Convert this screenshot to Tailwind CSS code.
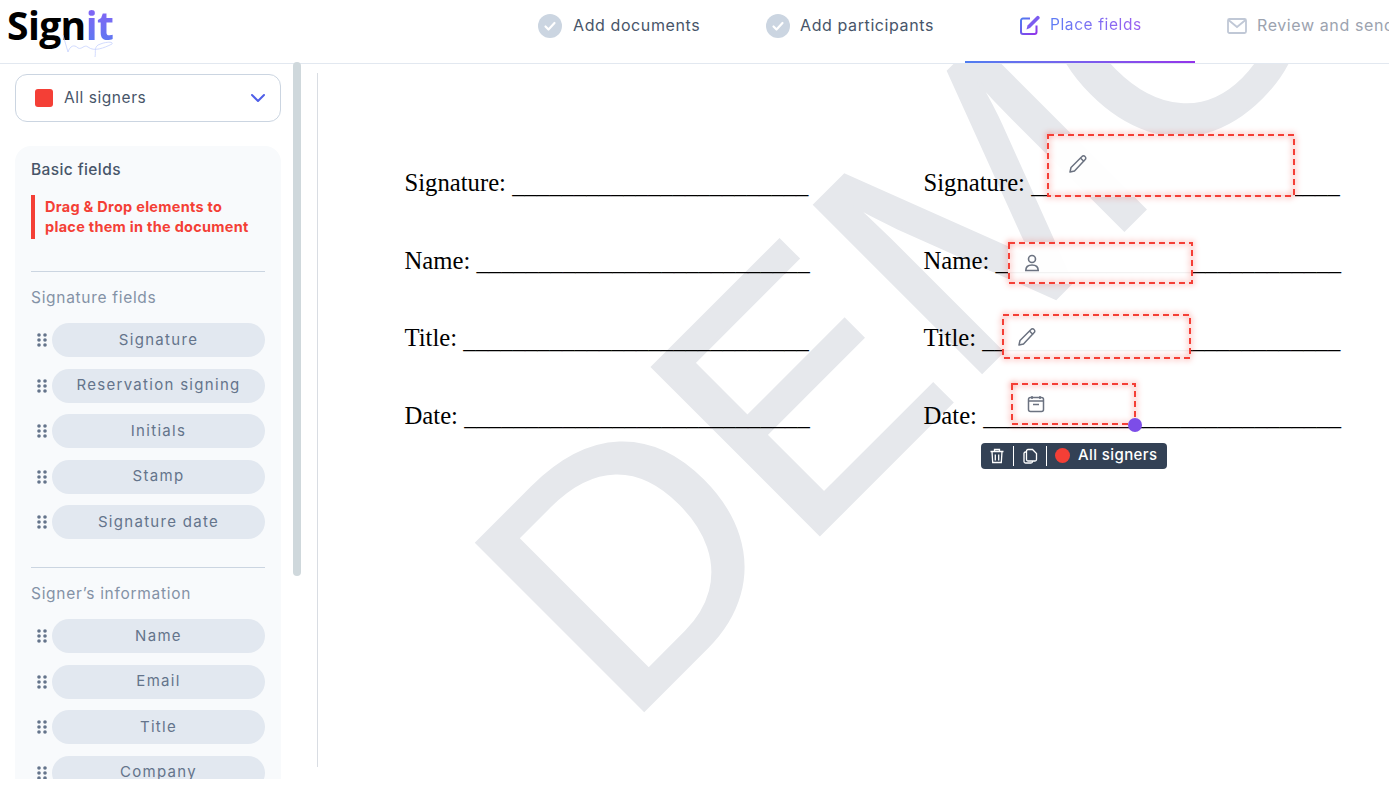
<!DOCTYPE html>
<html lang="en">
<head>
    <meta charset="UTF-8">
    <meta name="viewport" content="width=device-width, initial-scale=1.0">
    <title>Signit - Place fields</title>
    <script src="https://cdn.jsdelivr.net/npm/@tailwindcss/browser@4"></script>
</head>
<body class="bg-white font-['Inter',sans-serif] h-[799px] w-[1389px] overflow-hidden">
    <!-- top bar -->
    <header class="relative h-[64px] border-b border-[#e2e8f0] flex">
        <div class="relative w-[520px] pl-[7px] pt-[2px]">
            <span class="font-['Open_Sans',sans-serif] font-bold text-[39px] leading-[46px] tracking-[-0.6px] text-black">Sign<span class="bg-gradient-to-b from-[#8b5cf6] to-[#4f7df0] bg-clip-text text-transparent">it</span></span>
            <svg class="absolute left-[60px] top-[30px]" width="56" height="28" viewBox="0 0 56 28" fill="none" stroke="#c7d2fe" stroke-width="0.8"><path d="M3 5 L8 22 C10 16 14 14 18 18 C22 20 24 14 28 17 C34 22 44 18 52 14 C54 11 44 12 38 15 C34 18 36 22 35 27"/></svg>
        </div>
        <nav class="absolute left-0 top-0 h-[63px] w-full text-[16px] tracking-[0.6px] overflow-hidden">
            <div class="absolute left-[538px] top-[14px] flex items-center gap-[11px] text-[#475569]">
                <svg width="24" height="24" viewBox="0 0 24 24"><circle cx="12" cy="12" r="12" fill="#cbd5e1"/><path d="M7.5 12.5l3 3 6-6.5" fill="none" stroke="#fff" stroke-width="2.2" stroke-linecap="round" stroke-linejoin="round"/></svg>
                <span class="relative top-[-1px]">Add documents</span>
            </div>
            <div class="absolute left-[766px] top-[14px] flex items-center gap-[10px] text-[#475569]">
                <svg width="24" height="24" viewBox="0 0 24 24"><circle cx="12" cy="12" r="12" fill="#cbd5e1"/><path d="M7.5 12.5l3 3 6-6.5" fill="none" stroke="#fff" stroke-width="2.2" stroke-linecap="round" stroke-linejoin="round"/></svg>
                <span class="relative top-[-1px]">Add participants</span>
            </div>
            <div class="absolute left-[1020px] top-[14px] flex items-center gap-[10px] text-[15.5px]">
                <svg width="20" height="21" viewBox="0 0 20 21" fill="none"><defs><linearGradient id="g1" x1="0" y1="0" x2="1" y2="1"><stop stop-color="#4f7df0"/><stop offset="1" stop-color="#9333ea"/></linearGradient></defs><path d="M10 3.5H3a2 2 0 0 0-2 2V17a2 2 0 0 0 2 2h11.5a2 2 0 0 0 2-2v-6.5" stroke="url(#g1)" stroke-width="2"/><path d="M6.5 14.5l1-4L16.5 1.5a1.8 1.8 0 0 1 2.6 2.6L10 13z" fill="#7c5cf0"/></svg>
                <span class="relative top-[-1px] bg-gradient-to-r from-[#5b7cf5] to-[#9b5cf0] bg-clip-text text-transparent">Place fields</span>
            </div>
            <div class="absolute left-[1227px] top-[14px] flex items-center gap-[10px] text-[#9ca3af] whitespace-nowrap">
                <svg width="20" height="18" viewBox="0 0 20 18" fill="none" stroke="#c0c8d6" stroke-width="1.8"><rect x="1" y="2" width="18" height="14" rx="1.5"/><path d="M1.5 3l8.5 7 8.5-7"/></svg>
                <span class="relative top-[-1px]">Review and send</span>
            </div>
            <div class="absolute left-[965px] top-[61px] h-[2px] w-[230px] bg-gradient-to-r from-[#4f7df0] to-[#9333ea]"></div>
        </nav>
    </header>

    <div class="flex h-[735px]">
        <!-- left sidebar -->
        <aside class="relative w-[317px] shrink-0 h-[715px]">
            <div class="h-full overflow-hidden pl-[15px] pt-[10px]">
                <div class="w-[266px] h-[48px] rounded-xl border border-[#cbd5e1] flex items-center pl-[19px] pr-[14px] text-[15.5px] tracking-[0.55px] text-[#475569]">
                    <span class="w-[18px] h-[18px] rounded-[3px] bg-[#f43f36]"></span>
                    <span class="ml-[11px]">All signers</span>
                    <svg class="ml-auto" width="16" height="10" viewBox="0 0 16 10" fill="none" stroke="#4f5fe8" stroke-width="2" stroke-linecap="round" stroke-linejoin="round"><path d="M2 2l6 6 6-6"/></svg>
                </div>
                <div class="mt-[24px] w-[266px] rounded-t-2xl bg-[#f8fafc] px-[16px] pt-[13px] pb-[40px]">
                    <h2 class="text-[15.5px] leading-[21px] tracking-[0.4px] font-medium text-[#475569]">Basic fields</h2>
                    <p class="mt-[15px] border-l-4 border-[#f43f36] pl-[10px] text-[14.5px] leading-[20px] h-[44px] pt-[2px] font-bold tracking-[0.28px] text-[#f43f36] whitespace-nowrap">Drag &amp; Drop elements to<br>place them in the document</p>
                    <hr class="mt-[32px] border-[#cbd5e1]">
                    <h3 class="mt-[15px] text-[15.5px] leading-[21px] tracking-[0.7px] text-[#8492a6]">Signature fields</h3>
                    <ul class="mt-[15px] flex flex-col gap-[11.5px] text-[15px] tracking-[1.3px] text-[#64748b]">
                        <li class="flex items-center"><svg class="w-[21px] shrink-0 pl-[6px]" height="14" viewBox="0 0 15 14" fill="#64748b"><circle cx="2" cy="2" r="1.8"/><circle cx="8" cy="2" r="1.8"/><circle cx="2" cy="7" r="1.8"/><circle cx="8" cy="7" r="1.8"/><circle cx="2" cy="12" r="1.8"/><circle cx="8" cy="12" r="1.8"/></svg><span class="h-[34px] w-[213px] rounded-full bg-[#e2e8f0] flex items-center justify-center">Signature</span></li>
                        <li class="flex items-center"><svg class="w-[21px] shrink-0 pl-[6px]" height="14" viewBox="0 0 15 14" fill="#64748b"><circle cx="2" cy="2" r="1.8"/><circle cx="8" cy="2" r="1.8"/><circle cx="2" cy="7" r="1.8"/><circle cx="8" cy="7" r="1.8"/><circle cx="2" cy="12" r="1.8"/><circle cx="8" cy="12" r="1.8"/></svg><span class="h-[34px] w-[213px] rounded-full bg-[#e2e8f0] flex items-center justify-center">Reservation signing</span></li>
                        <li class="flex items-center"><svg class="w-[21px] shrink-0 pl-[6px]" height="14" viewBox="0 0 15 14" fill="#64748b"><circle cx="2" cy="2" r="1.8"/><circle cx="8" cy="2" r="1.8"/><circle cx="2" cy="7" r="1.8"/><circle cx="8" cy="7" r="1.8"/><circle cx="2" cy="12" r="1.8"/><circle cx="8" cy="12" r="1.8"/></svg><span class="h-[34px] w-[213px] rounded-full bg-[#e2e8f0] flex items-center justify-center">Initials</span></li>
                        <li class="flex items-center"><svg class="w-[21px] shrink-0 pl-[6px]" height="14" viewBox="0 0 15 14" fill="#64748b"><circle cx="2" cy="2" r="1.8"/><circle cx="8" cy="2" r="1.8"/><circle cx="2" cy="7" r="1.8"/><circle cx="8" cy="7" r="1.8"/><circle cx="2" cy="12" r="1.8"/><circle cx="8" cy="12" r="1.8"/></svg><span class="h-[34px] w-[213px] rounded-full bg-[#e2e8f0] flex items-center justify-center">Stamp</span></li>
                        <li class="flex items-center"><svg class="w-[21px] shrink-0 pl-[6px]" height="14" viewBox="0 0 15 14" fill="#64748b"><circle cx="2" cy="2" r="1.8"/><circle cx="8" cy="2" r="1.8"/><circle cx="2" cy="7" r="1.8"/><circle cx="8" cy="7" r="1.8"/><circle cx="2" cy="12" r="1.8"/><circle cx="8" cy="12" r="1.8"/></svg><span class="h-[34px] w-[213px] rounded-full bg-[#e2e8f0] flex items-center justify-center">Signature date</span></li>
                    </ul>
                    <hr class="mt-[28px] border-[#cbd5e1]">
                    <h3 class="mt-[15px] text-[15.5px] leading-[21px] tracking-[0.7px] text-[#8492a6]">Signer’s information</h3>
                    <ul class="mt-[15px] flex flex-col gap-[11.5px] text-[15px] tracking-[1.3px] text-[#64748b]">
                        <li class="flex items-center"><svg class="w-[21px] shrink-0 pl-[6px]" height="14" viewBox="0 0 15 14" fill="#64748b"><circle cx="2" cy="2" r="1.8"/><circle cx="8" cy="2" r="1.8"/><circle cx="2" cy="7" r="1.8"/><circle cx="8" cy="7" r="1.8"/><circle cx="2" cy="12" r="1.8"/><circle cx="8" cy="12" r="1.8"/></svg><span class="h-[34px] w-[213px] rounded-full bg-[#e2e8f0] flex items-center justify-center">Name</span></li>
                        <li class="flex items-center"><svg class="w-[21px] shrink-0 pl-[6px]" height="14" viewBox="0 0 15 14" fill="#64748b"><circle cx="2" cy="2" r="1.8"/><circle cx="8" cy="2" r="1.8"/><circle cx="2" cy="7" r="1.8"/><circle cx="8" cy="7" r="1.8"/><circle cx="2" cy="12" r="1.8"/><circle cx="8" cy="12" r="1.8"/></svg><span class="h-[34px] w-[213px] rounded-full bg-[#e2e8f0] flex items-center justify-center">Email</span></li>
                        <li class="flex items-center"><svg class="w-[21px] shrink-0 pl-[6px]" height="14" viewBox="0 0 15 14" fill="#64748b"><circle cx="2" cy="2" r="1.8"/><circle cx="8" cy="2" r="1.8"/><circle cx="2" cy="7" r="1.8"/><circle cx="8" cy="7" r="1.8"/><circle cx="2" cy="12" r="1.8"/><circle cx="8" cy="12" r="1.8"/></svg><span class="h-[34px] w-[213px] rounded-full bg-[#e2e8f0] flex items-center justify-center">Title</span></li>
                        <li class="flex items-center"><svg class="w-[21px] shrink-0 pl-[6px]" height="14" viewBox="0 0 15 14" fill="#64748b"><circle cx="2" cy="2" r="1.8"/><circle cx="8" cy="2" r="1.8"/><circle cx="2" cy="7" r="1.8"/><circle cx="8" cy="7" r="1.8"/><circle cx="2" cy="12" r="1.8"/><circle cx="8" cy="12" r="1.8"/></svg><span class="h-[34px] w-[213px] rounded-full bg-[#e2e8f0] flex items-center justify-center">Company</span></li>
                    </ul>
                </div>
            </div>
            <div class="absolute left-[293px] top-[-2px] h-[514px] w-[8px] rounded-full bg-[#cfd8dc]"></div>
        </aside>

        <!-- document -->
        <main class="relative flex-1 h-[735px] overflow-hidden">
            <div class="absolute left-0 top-[9px] h-[694px] w-px bg-[#d9dde3]"></div>
            <div class="absolute left-[72px] top-[45px] -rotate-45 origin-center font-['Liberation_Sans',sans-serif] text-[344px] leading-none text-[#e6e8ec] [-webkit-text-stroke:3px_#e6e8ec] whitespace-nowrap select-none">DEMO</div>

            <div class="relative grid grid-cols-[519px_1fr] pl-[87.5px] pt-[99px] font-['Liberation_Serif',serif] text-[24.7px] leading-[40px] text-black">
                <div class="flex flex-col gap-[37.5px] whitespace-nowrap">
                    <p>Signature: <span class="relative top-[1.5px]">________________________</span></p>
                    <p>Name: <span class="relative top-[1.5px]">___________________________</span></p>
                    <p>Title: <span class="relative top-[1.5px]">____________________________</span></p>
                    <p>Date: <span class="relative top-[1.5px]">____________________________</span></p>
                </div>
                <div class="flex flex-col gap-[37.5px] whitespace-nowrap">
                    <p>Signature: <span class="relative top-[1.5px]">_________________________</span></p>
                    <p>Name: <span class="relative top-[1.5px]">____________________________</span></p>
                    <p>Title: <span class="relative top-[1.5px]">_____________________________</span></p>
                    <p>Date: <span class="relative top-[1.5px]">_____________________________</span></p>
                </div>
            </div>

            <!-- placed fields -->
            <div class="absolute left-[730px] top-[70px] w-[248px] h-[63px] bg-white/95 pl-[21px] pt-[20px]">
                <svg class="absolute left-0 top-0 overflow-visible drop-shadow-[0_0_3px_#f43f36]" width="248" height="63" fill="none"><rect x="1" y="1" width="246" height="61" stroke="#f43f36" stroke-width="2" stroke-dasharray="6 4"/></svg>
                <svg class="w-[20px] h-[20px]" viewBox="0 0 20 20" fill="none" stroke="#6b7280" stroke-width="1.5" stroke-linejoin="round"><path d="M2 18l1-4.5L14 2.5a2 2 0 0 1 3 0 2 2 0 0 1 .2 3L6.5 17z"/><path d="M12.5 4l3.5 3.5"/></svg>
            </div>
            <div class="absolute left-[691px] top-[178px] w-[185px] h-[42px] bg-white/95 pl-[15px] pt-[12px]">
                <svg class="absolute left-0 top-0 overflow-visible drop-shadow-[0_0_3px_#f43f36]" width="185" height="42" fill="none"><rect x="1" y="1" width="183" height="40" stroke="#f43f36" stroke-width="2" stroke-dasharray="6 4"/></svg>
                <svg class="w-[18px] h-[18px]" viewBox="0 0 18 18" fill="none" stroke="#6b7280" stroke-width="1.6"><circle cx="9" cy="5" r="3.5"/><path d="M2.8 16.5c0-3.5 2.5-5.5 6.2-5.5s6.2 2 6.2 5.5z"/></svg>
            </div>
            <div class="absolute left-[685px] top-[250px] w-[189px] h-[45px] bg-white/95 pl-[15px] pt-[13px]">
                <svg class="absolute left-0 top-0 overflow-visible drop-shadow-[0_0_3px_#f43f36]" width="189" height="45" fill="none"><rect x="1" y="1" width="187" height="43" stroke="#f43f36" stroke-width="2" stroke-dasharray="6 4"/></svg>
                <svg class="w-[20px] h-[20px]" viewBox="0 0 20 20" fill="none" stroke="#6b7280" stroke-width="1.5" stroke-linejoin="round"><path d="M2 18l1-4.5L14 2.5a2 2 0 0 1 3 0 2 2 0 0 1 .2 3L6.5 17z"/><path d="M12.5 4l3.5 3.5"/></svg>
            </div>
            <div class="absolute left-[694px] top-[319px] w-[125px] h-[42px] bg-white/95 pl-[16px] pt-[12px]">
                <svg class="absolute left-0 top-0 overflow-visible drop-shadow-[0_0_3px_#f43f36]" width="125" height="42" fill="none"><rect x="1" y="1" width="123" height="40" stroke="#f43f36" stroke-width="2" stroke-dasharray="6 4"/></svg>
                <svg class="w-[18px] h-[18px]" viewBox="0 0 18 18" fill="none" stroke="#6b7280" stroke-width="1.5"><rect x="1.5" y="2.5" width="15" height="14" rx="2"/><path d="M1.5 6h15M5 1v3M13 1v3M6 9.5h6"/></svg>
            </div>
            <div class="absolute left-[811px] top-[354px] w-[14px] h-[14px] rounded-full bg-[#7c4de8]"></div>
            <!-- field toolbar -->
            <div class="absolute left-[664px] top-[379px] h-[26px] w-[186px] rounded-[4px] bg-[#334155] flex items-center pl-[9px] pb-[1px] text-white text-[15px] tracking-[0.4px] font-medium whitespace-nowrap">
                <svg width="14" height="16" viewBox="0 0 14 16" fill="none" stroke="#fff" stroke-width="1.3"><path d="M0.5 3.5h13M4.5 3.5V1.5h5v2M2 3.5l.7 11h8.6l.7-11M5.3 6.5v6M8.7 6.5v6"/></svg>
                <span class="ml-[9px] h-[20px] w-px bg-white"></span>
                <svg class="ml-[9px]" width="15" height="16" viewBox="0 0 15 16" fill="none" stroke="#fff" stroke-width="1.3"><path d="M5 1.5h4.5l4 4v6a1.5 1.5 0 0 1-1.5 1.5H5a1.5 1.5 0 0 1-1.5-1.5V3A1.5 1.5 0 0 1 5 1.5z"/><path d="M3.5 4H2.5A1.5 1.5 0 0 0 1 5.5v8A1.5 1.5 0 0 0 2.5 15H8a1.5 1.5 0 0 0 1.5-1.5V13"/></svg>
                <span class="ml-[8px] h-[20px] w-px bg-white"></span>
                <span class="ml-[8px] w-[15px] h-[15px] rounded-full bg-[#f43f36]"></span>
                <span class="ml-[8px]">All signers</span>
            </div>
        </main>
    </div>
</body>
</html>
